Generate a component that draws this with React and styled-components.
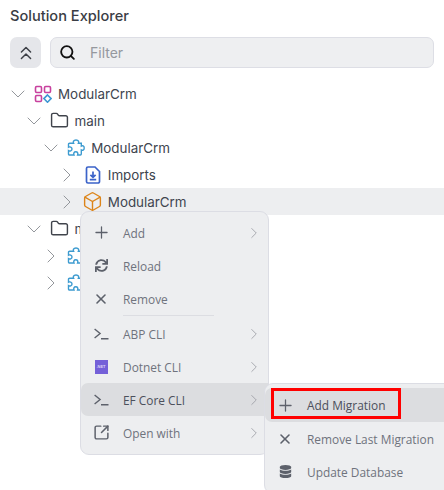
import React from "react";
import styled, { createGlobalStyle } from "styled-components";
import {
	ChevronDown,
	ChevronRight,
	ChevronsUp,
	Folder,
	Plus,
	Search,
	Box,
	X,
	SquareArrowOutUpRight,
} from "lucide-react";
import { FaSync, FaDatabase } from "react-icons/fa";

const GlobalStyle = createGlobalStyle`
	html, body {
		margin: 0;
		padding: 0;
		background: #fff;
	}
	svg {
		flex: none;
	}
`;

const Page = styled.div`
	position: relative;
	width: 444px;
	height: 490px;
	overflow: hidden;
	background: #fff;
	font-family: Inter, "Liberation Sans", sans-serif;
	color: #3f4452;
`;

const Title = styled.h1`
	margin: 0;
	padding: 7px 10px 0;
	height: 29px;
	box-sizing: border-box;
	font-size: 14.6px;
	line-height: 18px;
	font-weight: 500;
	color: #3a3d45;
`;

const Toolbar = styled.div`
	display: flex;
	gap: 9px;
	padding: 8px 10px 0;
	height: 31px;
`;

const CollapseButton = styled.button`
	width: 31px;
	height: 31px;
	padding: 0;
	flex: none;
	display: flex;
	align-items: center;
	justify-content: center;
	background: #e5e6ea;
	border: 0;
	border-radius: 7px;
	color: #3c3f46;
`;

const FilterBox = styled.div`
	flex: 1;
	display: flex;
	align-items: center;
	gap: 14px;
	padding-left: 8px;
	box-sizing: border-box;
	background: #eeeff1;
	border: 1px solid #dddee5;
	border-radius: 7px;
	color: #111;
`;

const FilterText = styled.span`
	font-size: 14px;
	color: #95989e;
`;

const Tree = styled.div`
	padding-top: 12px;
`;

const Row = styled.div`
	display: flex;
	align-items: center;
	height: 27px;
	padding-left: ${(p) => 10 + p.$depth * 16.6}px;
	background: ${(p) => (p.$active ? "#edeef0" : "transparent")};
	font-size: 13.4px;
	color: #40454f;
`;

const Caret = styled.span`
	width: 15px;
	margin-right: 9px;
	display: flex;
	justify-content: center;
	color: #94979c;
`;

const RowIcon = styled.span`
	width: 18px;
	height: 18px;
	margin-right: 6px;
	display: flex;
	align-items: center;
	justify-content: center;
	color: ${(p) => p.$color};
`;

const Menu = styled.div`
	position: absolute;
	left: ${(p) => p.$left}px;
	top: ${(p) => p.$top}px;
	width: ${(p) => p.$width}px;
	padding: 4px 0 5px;
	box-sizing: border-box;
	background: #edeef0;
	border: 1px solid #dcdde4;
	border-radius: 9px;
	font-family: "Open Sans", "Liberation Sans", sans-serif;
`;

const MenuItem = styled.div`
	position: relative;
	display: flex;
	align-items: center;
	height: ${(p) => p.$height || 33}px;
	padding-left: 12px;
	font-size: 11.9px;
	color: ${(p) => (p.$strong ? "#4c505c" : "#6f737d")};
	background: ${(p) => (p.$active ? "#dcdde0" : "transparent")};
	border-radius: ${(p) => (p.$active ? "7px 0 0 7px" : "0")};
`;

const MenuIcon = styled.span`
	width: 16px;
	height: 16px;
	margin-right: 14px;
	flex: none;
	display: flex;
	align-items: center;
	justify-content: center;
	color: #5d616b;
`;

const MenuLabel = styled.span`
	flex: 1;
`;

const MenuArrow = styled.span`
	display: flex;
	margin-right: 5px;
	color: #9a9ca3;
`;

const Separator = styled.div`
	height: 1px;
	margin: 0 54px 1px 42px;
	background: #dcdde2;
`;

const DotnetBadge = styled.span`
	width: 13px;
	height: 14px;
	display: flex;
	align-items: center;
	justify-content: center;
	background: #7460d8;
	color: #d8d4f6;
	font-size: 4px;
	font-weight: 700;
	font-family: "Liberation Sans", sans-serif;
`;

const Highlight = styled.div`
	position: absolute;
	left: 271px;
	top: 388px;
	width: 130px;
	height: 31px;
	box-sizing: border-box;
	border: 3px solid #f00;
	pointer-events: none;
`;

function ModuleIcon() {
	return (
		<svg width="18" height="18" viewBox="0 0 18 18" fill="none" strokeWidth="1.6">
			<rect x="1.5" y="1.5" width="6" height="6" rx="1.2" stroke="#c8419e" />
			<rect x="10.5" y="1.5" width="6" height="6" rx="1.2" stroke="#c8419e" />
			<rect x="1.5" y="10.5" width="6" height="6" rx="1.2" stroke="#c8419e" />
			<path d="M13.5 10l3.6 3.6-3.6 3.6-3.6-3.6z" stroke="#3d97d3" />
		</svg>
	);
}

function PuzzleIcon() {
	return (
		<svg width="18" height="18" viewBox="0 0 18 18" fill="none" stroke="#3d9bd0" strokeWidth="1.4">
			<path d="M2.5 4.2H6.6C6 3 6.2 1 9 1c2.8 0 3 2 2.4 3.2h2.9V7c1.2-.6 2.9-.2 2.9 2s-1.7 2.6-2.9 2v4a1 1 0 0 1-1 1h-2.7c.6-1.4.2-3.2-1.8-3.2S6.4 14.600 7 16H2.500a1 1 0 0 1-1-1v-3.400C2.800 12.400 5 12 5 10S2.800 7.400 1.500 8.200V5.200a1 1 0 0 1 1-1z" />
		</svg>
	);
}

function ImportsIcon() {
	return (
		<svg width="18" height="18" viewBox="0 0 18 18" fill="none" stroke="#3b63c9" strokeWidth="1.7">
			<path d="M2.5 2.5a1.5 1.5 0 0 1 1.5-1.5h7l4.5 4.5V15.5a1.5 1.5 0 0 1-1.5 1.5h-10a1.5 1.5 0 0 1-1.5-1.5z" />
			<path d="M9 5.5v5.5M6.4 8.8l2.6 2.6 2.6-2.6M5.8 13.7h6.4" strokeWidth="1.7" />
		</svg>
	);
}

function TerminalIcon() {
	return (
		<svg width="15" height="12" viewBox="0 0 15 12" fill="none" stroke="currentColor" strokeWidth="1.4">
			<path d="M.6 1l5.5 4.5L.6 10M7 10.8h7.5" />
		</svg>
	);
}

const treeRows = [
	{ depth: 0, open: true, label: "ModularCrm", icon: <ModuleIcon /> },
	{ depth: 1, open: true, label: "main", icon: <Folder size={19} strokeWidth={1.8} />, color: "#40444c" },
	{ depth: 2, open: true, label: "ModularCrm", icon: <PuzzleIcon /> },
	{ depth: 3, label: "Imports", icon: <ImportsIcon /> },
	{ depth: 3, label: "ModularCrm", icon: <Box size={21} strokeWidth={1.6} />, color: "#dc8419", active: true },
	{ depth: 1, open: true, label: "modules", icon: <Folder size={19} strokeWidth={1.8} />, color: "#40444c" },
	{ depth: 2, label: "ModularCrm", icon: <PuzzleIcon /> },
	{ depth: 2, label: "ModularCrm", icon: <PuzzleIcon /> },
];

const mainMenu = [
	{ label: "Add", icon: <Plus size={19} strokeWidth={1.6} />, arrow: true },
	{ label: "Reload", icon: <FaSync size={13} /> },
	{ label: "Remove", icon: <X size={16} strokeWidth={2.4} /> },
	{ separator: true },
	{ label: "ABP CLI", icon: <TerminalIcon />, arrow: true },
	{ label: "Dotnet CLI", icon: <DotnetBadge>.NET</DotnetBadge>, arrow: true },
	{ label: "EF Core CLI", icon: <TerminalIcon />, arrow: true, active: true, strong: true },
	{ label: "Open with", icon: <SquareArrowOutUpRight size={17} strokeWidth={2.1} />, arrow: true },
];

const subMenu = [
	{ label: "Add Migration", icon: <Plus size={19} strokeWidth={1.6} />, active: true, strong: true, height: 34 },
	{ label: "Remove Last Migration", icon: <X size={16} strokeWidth={2.4} />, height: 33 },
	{ label: "Update Database", icon: <FaDatabase size={13} />, height: 33 },
];

export default function App() {
	return (
		<Page>
			<GlobalStyle />
			<Title>Solution Explorer</Title>
			<Toolbar>
				<CollapseButton>
					<ChevronsUp size={22} strokeWidth={1.6} />
				</CollapseButton>
				<FilterBox>
					<Search size={17} strokeWidth={2.6} />
					<FilterText>Filter</FilterText>
				</FilterBox>
			</Toolbar>
			<Tree>
				{treeRows.map((row, i) => (
					<Row key={i} $depth={row.depth} $active={row.active}>
						<Caret>
							{row.open ? (
								<ChevronDown size={24} strokeWidth={1} />
							) : (
								<ChevronRight size={24} strokeWidth={1} />
							)}
						</Caret>
						<RowIcon $color={row.color}>{row.icon}</RowIcon>
						{row.label}
					</Row>
				))}
			</Tree>
			<Menu $left={80} $top={211} $width={189}>
				{mainMenu.map((item, i) =>
					item.separator ? (
						<Separator key={i} />
					) : (
						<MenuItem key={i} $active={item.active} $strong={item.strong}>
							<MenuIcon>{item.icon}</MenuIcon>
							<MenuLabel>{item.label}</MenuLabel>
							{item.arrow && (
								<MenuArrow>
									<ChevronRight size={18} strokeWidth={1.1} />
								</MenuArrow>
							)}
						</MenuItem>
					),
				)}
			</Menu>
			<Menu $left={264} $top={383} $width={200}>
				{subMenu.map((item, i) => (
					<MenuItem key={i} $active={item.active} $strong={item.strong} $height={item.height}>
						<MenuIcon>{item.icon}</MenuIcon>
						<MenuLabel>{item.label}</MenuLabel>
					</MenuItem>
				))}
			</Menu>
			<Highlight />
		</Page>
	);
}
